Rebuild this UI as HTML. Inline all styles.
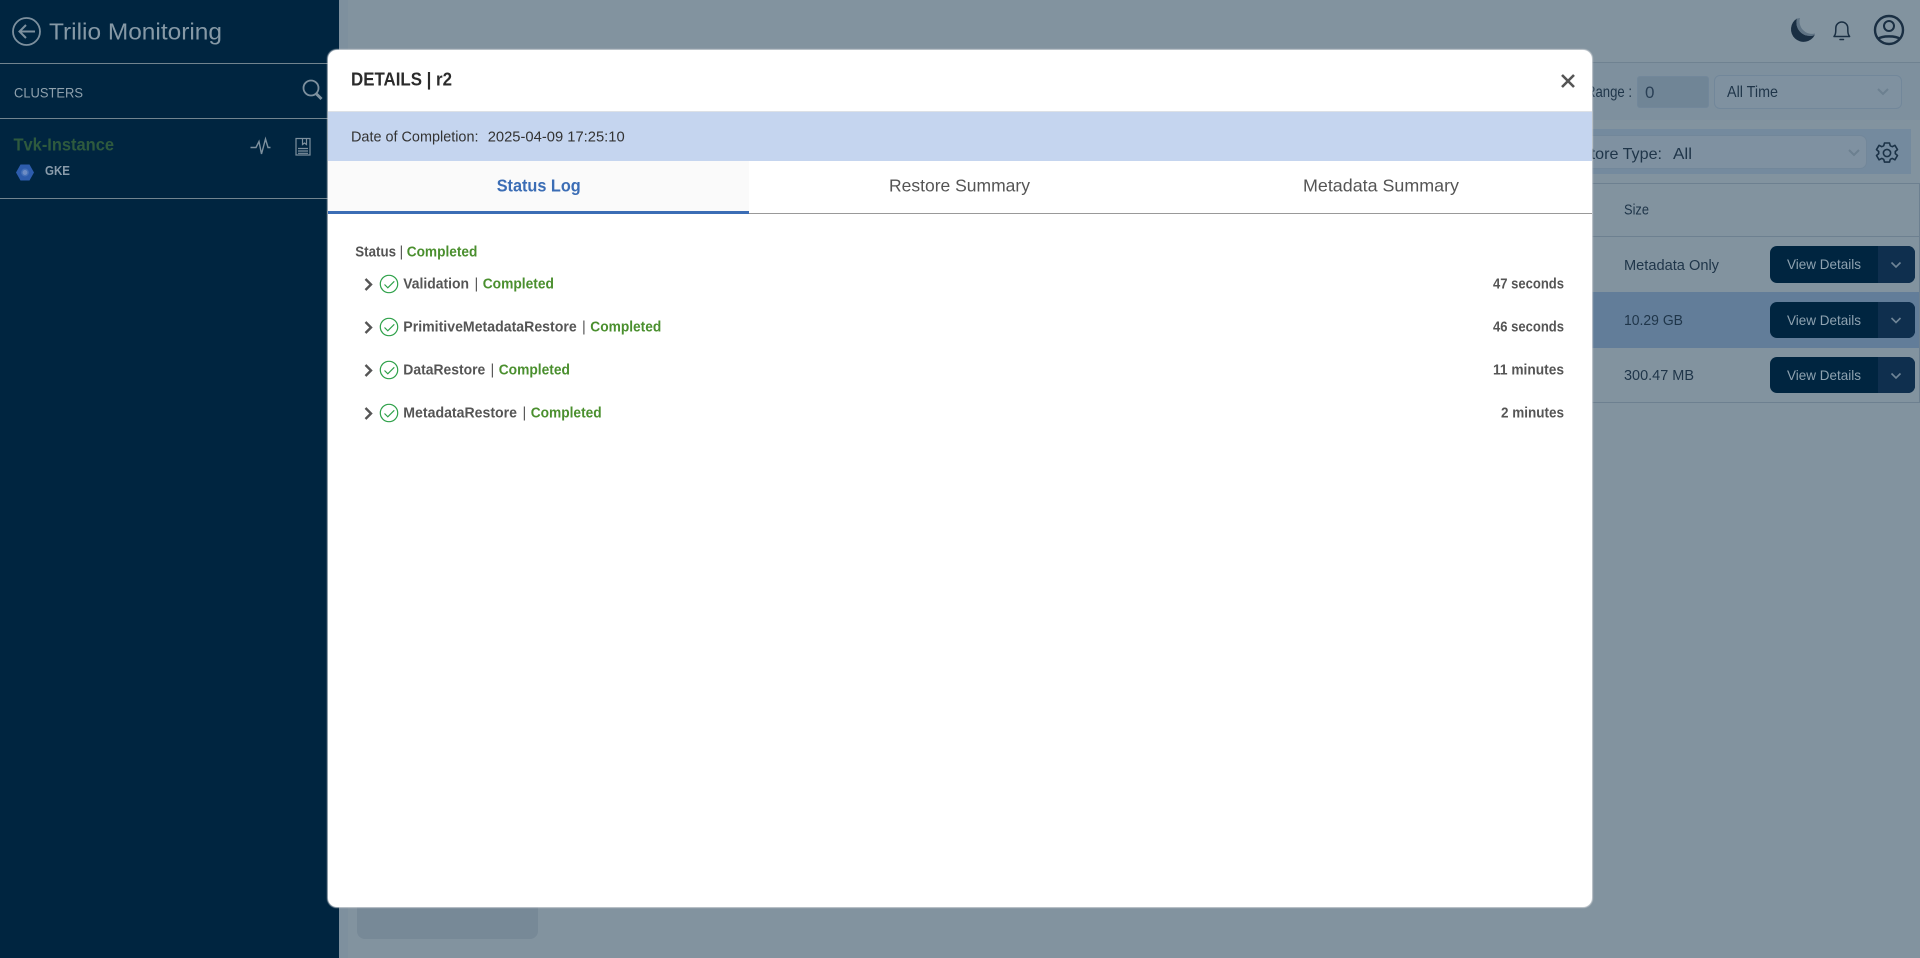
<!DOCTYPE html>
<html lang="en">
<head>
<meta charset="utf-8">
<title>Trilio Monitoring</title>
<style>
html,body{margin:0;padding:0;width:1920px;height:958px;overflow:hidden;background:#82939f;font-family:"Liberation Sans",sans-serif}
.b{position:absolute;box-sizing:border-box}
svg{position:absolute;left:0;top:0;overflow:visible}
text{font-family:"Liberation Sans",sans-serif}
</style>
</head>
<body>
<!-- background page -->
<div class="b" style="left:339px;top:0;width:9px;height:958px;background:#7e909e"></div>
<div class="b" style="left:348px;top:62px;width:1572px;height:1px;background:#6f8291"></div>
<div class="b" style="left:348px;top:63px;width:1572px;height:57px;background:#7e909e"></div>
<div class="b" style="left:1500px;top:129px;width:411px;height:45px;background:#748a9e"></div>
<div class="b" style="left:1500px;top:135px;width:367px;height:34px;background:#7f91a1;border:1px solid #72879a;border-radius:7px"></div>
<div class="b" style="left:1637px;top:76px;width:72px;height:32px;background:#708596;border:1px solid #72879a;border-radius:3px"></div>
<div class="b" style="left:1714px;top:75px;width:188px;height:34px;background:#7f91a0;border:1px solid #72879a;border-radius:6px"></div>
<div class="b" style="left:1500px;top:183px;width:420px;height:220px;border:1px solid #6d8090;border-width:1px 1px 1px 0"></div>
<div class="b" style="left:1500px;top:236px;width:419px;height:1px;background:#6d8090"></div>
<div class="b" style="left:1500px;top:292px;width:419px;height:56px;background:#627d99"></div>
<div class="b" style="left:357px;top:800px;width:181px;height:139px;background:#778997;border-radius:8px"></div>
<div class="b" style="left:1770px;top:246px;width:145px;height:37px;background:#002540;border-radius:7px;overflow:hidden"><div class="b" style="left:108px;top:0;width:37px;height:37px;background:#0f2f4e"></div></div>
<div class="b" style="left:1770px;top:302px;width:145px;height:36px;background:#002540;border-radius:7px;overflow:hidden"><div class="b" style="left:108px;top:0;width:37px;height:36px;background:#0f2f4e"></div></div>
<div class="b" style="left:1770px;top:357px;width:145px;height:36px;background:#002540;border-radius:7px;overflow:hidden"><div class="b" style="left:108px;top:0;width:37px;height:36px;background:#0f2f4e"></div></div>

<svg width="1920" height="958" viewBox="0 0 1920 958">
  <g fill="#1f3549" font-size="16">
    <text x="1586" y="97" textLength="46" lengthAdjust="spacingAndGlyphs">Range :</text>
    <text x="1645" y="98" font-size="17" fill="#2a4056">0</text>
    <text x="1727" y="97" textLength="51" lengthAdjust="spacingAndGlyphs">All Time</text>
    <text x="1562" y="159" textLength="100" lengthAdjust="spacingAndGlyphs">Restore Type:</text>
    <text x="1673" y="159" textLength="19" lengthAdjust="spacingAndGlyphs">All</text>
    <text x="1624" y="214.500" font-size="14.500" textLength="25" lengthAdjust="spacingAndGlyphs">Size</text>
    <text x="1624" y="270" font-size="14.500" textLength="95" lengthAdjust="spacingAndGlyphs">Metadata Only</text>
    <text x="1624" y="325" font-size="14.500" textLength="59" lengthAdjust="spacingAndGlyphs">10.29 GB</text>
    <text x="1624" y="380" font-size="14.500" textLength="70" lengthAdjust="spacingAndGlyphs">300.47 MB</text>
  </g>
  <g fill="#8ea2b0" font-size="14">
    <text x="1787" y="269" textLength="74" lengthAdjust="spacingAndGlyphs">View Details</text>
    <text x="1787" y="325" textLength="74" lengthAdjust="spacingAndGlyphs">View Details</text>
    <text x="1787" y="380" textLength="74" lengthAdjust="spacingAndGlyphs">View Details</text>
  </g>
  <g fill="none" stroke="#6f8597" stroke-width="1.600">
    <path d="M1891.500 262.500l4.500 4.500 4.500-4.500"/><path d="M1891.500 318l4.500 4.500 4.500-4.500"/><path d="M1891.500 373.500l4.500 4.500 4.500-4.500"/>
  </g>
  <path d="M1878 89l5 5 5-5M1849 150l5 5 5-5" fill="none" stroke="#6c8090" stroke-width="2"/>
  <!-- gear -->
  <g fill="none" stroke="#1b3247" stroke-width="1.600" stroke-linejoin="round">
    <path d="M1884.500 143h5l.8 2.800 2 .9 2.600-1.400 2.600 4.300-2.200 1.900v2.100l2.200 1.900-2.600 4.300-2.600-1.400-2 .9-.8 2.800h-5l-.8-2.800-2-.9-2.600 1.400-2.600-4.300 2.200-1.900v-2.100l-2.200-1.900 2.600-4.300 2.600 1.400 2-.9z"/>
    <circle cx="1887" cy="153" r="3.600"/>
  </g>
  <!-- moon -->
  <path d="M1797 18.500a12.600 12.600 0 1 0 17.800 16.500a13.500 13.500 0 0 1-17.800-16.500z" fill="#1a2f43"/>
  <path d="M1797 18.500a13.500 13.500 0 0 0 17.800 16.500l.2-1.500a12.500 12.500 0 0 1-15-15.500z" fill="#5f7384"/>
  <!-- bell -->
  <g fill="none" stroke="#1a2f43" stroke-width="1.500" stroke-linejoin="round" stroke-linecap="round">
    <path d="M1834 36.500c1.300-1.800 1.800-3 1.800-7v-1.500a6 6 0 0 1 12 0v1.500c0 4 .5 5.200 1.800 7z"/>
    <path d="M1840 39.500h3.500"/>
  </g>
  <!-- user -->
  <g fill="none" stroke="#1a2f43" stroke-width="2.400">
    <circle cx="1889" cy="30" r="14"/>
    <circle cx="1889" cy="26" r="5" stroke-width="2"/>
    <path d="M1878 39c4-3.500 18-3.500 22 0"/>
  </g>
</svg>

<!-- sidebar -->
<div class="b" style="left:0;top:0;width:339px;height:958px;background:#002540"></div>
<div class="b" style="left:0;top:63px;width:339px;height:1px;background:#71848f"></div>
<div class="b" style="left:0;top:118px;width:339px;height:1px;background:#71848f"></div>
<div class="b" style="left:0;top:198px;width:339px;height:1px;background:#71848f"></div>
<svg width="1920" height="958" viewBox="0 0 1920 958">
  <g fill="none" stroke="#7d909e" stroke-width="1.800">
    <circle cx="26.500" cy="31.500" r="13.500"/>
    <path d="M35 31.500H20M26 25l-6.500 6.500L26 38" stroke-width="2"/>
  </g>
  <text x="49" y="39.500" font-size="23" fill="#8699a6" textLength="173" lengthAdjust="spacingAndGlyphs">Trilio Monitoring</text>
  <text x="14" y="97.500" font-size="14" fill="#8fa1ad" textLength="69" lengthAdjust="spacingAndGlyphs">CLUSTERS</text>
  <text x="13.500" y="150.500" font-size="17.500" font-weight="bold" fill="#2e5a3e" textLength="100.500" lengthAdjust="spacingAndGlyphs">Tvk-Instance</text>
  <text x="45" y="175" font-size="12.500" font-weight="bold" fill="#8a9cab" textLength="25" lengthAdjust="spacingAndGlyphs">GKE</text>
  <polygon points="16,172.500 20.500,164.500 29.500,164.500 34,172.500 29.500,180.500 20.500,180.500" fill="#2d5cac"/>
  <circle cx="25" cy="172.500" r="3.200" fill="#6d8cc4" stroke="#4470b8" stroke-width="1.500"/>
  <!-- search -->
  <g fill="none" stroke="#7d909e" stroke-width="1.800">
    <circle cx="311" cy="88" r="7.500"/>
    <path d="M316.500 94l5 5" stroke-width="3"/>
  </g>
  <!-- pulse -->
  <path d="M250.500 147.500h5.500l3-6 2.500 12.500 4-15 2.500 8.500h2.500" fill="none" stroke="#7d909e" stroke-width="1.400"/>
  <!-- document -->
  <g fill="none" stroke="#7d909e" stroke-width="1.200">
    <rect x="296" y="138.500" width="14" height="16.500"/>
    <path d="M298 148.500h10M298 151h10M298 153.300h10"/>
    <path d="M302.500 138.500v6l2-1.500 2 1.500v-6"/>
  </g>
</svg>

<!-- modal -->
<div class="b" style="left:328px;top:50px;width:1264px;height:857px;background:#fff;border-radius:9px;box-shadow:0 0 1px 1px rgba(210,214,218,.8);overflow:hidden">
  <div class="b" style="left:0;top:61px;width:1264px;height:1px;background:#dde1e6"></div>
  <div class="b" style="left:0;top:62px;width:1264px;height:49px;background:#c5d5ef"></div>
  <div class="b" style="left:0;top:111px;width:421px;height:50px;background:#fafafa"></div>
  <div class="b" style="left:0;top:163px;width:1264px;height:1px;background:#999"></div>
  <div class="b" style="left:0;top:161px;width:421px;height:3px;background:#3b6db5"></div>
</div>
<svg width="1920" height="958" viewBox="0 0 1920 958">
  <text x="351" y="85.500" font-size="18" font-weight="bold" fill="#2b2b2b" textLength="101" lengthAdjust="spacingAndGlyphs">DETAILS | r2</text>
  <path d="M1562 75l12 12M1574 75l-12 12" stroke="#555" stroke-width="2.600" fill="none"/>
  <g font-size="15" fill="#333">
    <text x="351" y="141.500" textLength="127.500" lengthAdjust="spacingAndGlyphs">Date of Completion:</text>
    <text x="487.700" y="141.500" textLength="137" lengthAdjust="spacingAndGlyphs">2025-04-09 17:25:10</text>
  </g>
  <text x="496.700" y="191.500" font-size="17.500" font-weight="bold" fill="#3b6db5" textLength="84" lengthAdjust="spacingAndGlyphs">Status Log</text>
  <text x="889" y="191.500" font-size="17.500" fill="#555" textLength="141" lengthAdjust="spacingAndGlyphs">Restore Summary</text>
  <text x="1303" y="191.500" font-size="17.500" fill="#555" textLength="156" lengthAdjust="spacingAndGlyphs">Metadata Summary</text>

  <g font-size="14.500" font-weight="bold" fill="#555">
    <text x="355.300" y="256.500" textLength="40.700" lengthAdjust="spacingAndGlyphs">Status</text>
    <text x="399.500" y="256.500" font-weight="normal">|</text>
    <text x="403.300" y="288.500" textLength="65.700" lengthAdjust="spacingAndGlyphs">Validation</text>
    <text x="474.500" y="288.500" font-weight="normal">|</text>
    <text x="403.300" y="331.500" textLength="173.400" lengthAdjust="spacingAndGlyphs">PrimitiveMetadataRestore</text>
    <text x="582" y="331.500" font-weight="normal">|</text>
    <text x="403.300" y="374.500" textLength="82" lengthAdjust="spacingAndGlyphs">DataRestore</text>
    <text x="490.500" y="374.500" font-weight="normal">|</text>
    <text x="403.300" y="417.500" textLength="113.700" lengthAdjust="spacingAndGlyphs">MetadataRestore</text>
    <text x="522.500" y="417.500" font-weight="normal">|</text>
    <text x="1493" y="288.500" textLength="71" lengthAdjust="spacingAndGlyphs">47 seconds</text>
    <text x="1493" y="331.500" textLength="71" lengthAdjust="spacingAndGlyphs">46 seconds</text>
    <text x="1493" y="374.500" textLength="71" lengthAdjust="spacingAndGlyphs">11 minutes</text>
    <text x="1501" y="417.500" textLength="63" lengthAdjust="spacingAndGlyphs">2 minutes</text>
  </g>
  <g font-size="14.500" font-weight="bold" fill="#4a8f2e">
    <text x="406.700" y="256.500" textLength="70.700" lengthAdjust="spacingAndGlyphs">Completed</text>
    <text x="482.700" y="288.500" textLength="71.300" lengthAdjust="spacingAndGlyphs">Completed</text>
    <text x="590.300" y="331.500" textLength="71" lengthAdjust="spacingAndGlyphs">Completed</text>
    <text x="498.700" y="374.500" textLength="71.300" lengthAdjust="spacingAndGlyphs">Completed</text>
    <text x="530.700" y="417.500" textLength="71" lengthAdjust="spacingAndGlyphs">Completed</text>
  </g>
  <g fill="none" stroke="#555" stroke-width="2.400">
    <path d="M365.500 279l5.500 5.500-5.500 5.500"/>
    <path d="M365.500 322l5.500 5.500-5.500 5.500"/>
    <path d="M365.500 365l5.500 5.500-5.500 5.500"/>
    <path d="M365.500 408l5.500 5.500-5.500 5.500"/>
  </g>
  <g fill="none" stroke="#2fa14a" stroke-width="1.200">
    <circle cx="389" cy="284" r="8.700"/><path d="M384.500 284.500l3.300 3.300 6.500-6.500"/>
    <circle cx="389" cy="327" r="8.700"/><path d="M384.500 327.500l3.300 3.300 6.500-6.500"/>
    <circle cx="389" cy="370" r="8.700"/><path d="M384.500 370.500l3.300 3.300 6.500-6.500"/>
    <circle cx="389" cy="413" r="8.700"/><path d="M384.500 413.500l3.300 3.300 6.500-6.500"/>
  </g>
</svg>
</body>
</html>
